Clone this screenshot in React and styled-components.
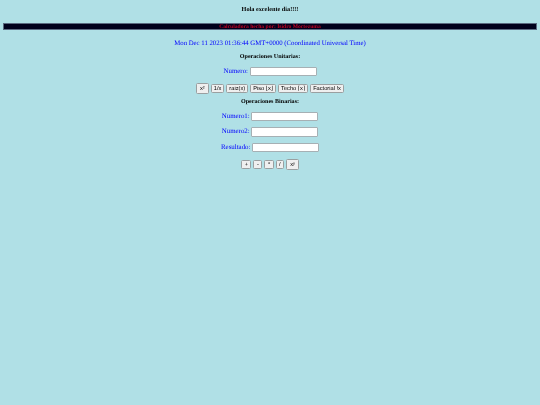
import React from "react";
import styled, { createGlobalStyle } from "styled-components";

const Global = createGlobalStyle`
  html, body { margin: 0; padding: 0; background: #b0e0e6; }
  body {
    font-family: "Liberation Serif", "Times New Roman", serif;
    text-rendering: geometricPrecision;
  }
`;

const Page = styled.div`
  width: 540px;
  height: 405px;
  overflow: hidden;
  display: flex;
  flex-direction: column;
  align-items: center;
  background: #b0e0e6;
  color: #0000ff;
  text-align: center;
  filter: blur(0.2px);
`;

const Greeting = styled.h1`
  margin: 5px 0 0;
  height: 9px;
  line-height: 9px;
  font-size: 6.25px;
  font-weight: bold;
  color: #000;
`;

const Banner = styled.div`
  box-sizing: border-box;
  width: 534px;
  height: 7px;
  margin-top: 9px;
  border: 0.5px solid #5a6a80;
  background: #00001c;
  color: #c00020;
  font-size: 5.6px;
  font-weight: bold;
  line-height: 6px;
`;

const DateLine = styled.p`
  margin: 8.5px 0 0;
  height: 10px;
  line-height: 10px;
  font-size: 6.75px;
`;

const SectionTitle = styled.h2`
  margin: ${(p) => p.$top}px 0 0;
  height: 9px;
  line-height: 9px;
  font-size: 6.1px;
  font-weight: bold;
  color: #000;
`;

const Field = styled.label`
  display: flex;
  align-items: center;
  justify-content: center;
  gap: 1.5px;
  margin-top: ${(p) => p.$top}px;
  height: 10px;
  font-size: 6.9px;
  line-height: 10px;
`;

const TextInput = styled.input`
  box-sizing: border-box;
  width: 67px;
  height: 9.5px;
  padding: 0;
  background: #fff;
  border: 1px solid #a6b0b4;
  border-radius: 1px;
`;

const ButtonRow = styled.div`
  display: flex;
  justify-content: center;
  align-items: center;
  gap: 2px;
  margin-top: ${(p) => p.$top}px;
`;

const CalcButton = styled.button`
  box-sizing: border-box;
  height: ${(p) => (p.$tall ? 11 : 9.5)}px;
  padding: 0 ${(p) => p.$pad ?? 2}px;
  background: #efefef;
  border: 0.75px solid #9a9fa0;
  border-radius: 1.5px;
  color: #000;
  font-family: "Liberation Sans", Arial, sans-serif;
  font-size: 5.7px;
  line-height: 8px;
  white-space: nowrap;
  text-rendering: geometricPrecision;
`;

const unary = ["1/x", "raiz(x)", "Piso ⌊x⌋", "Techo ⌈x⌉", "Factorial !x"];
const binary = ["+", "-", "*", "/"];

export default function App() {
  return (
    <>
      <Global />
      <Page>
        <Greeting>Hola excelente dia!!!!</Greeting>
        <Banner>Calculadora hecha por: Isidro Moctezuma</Banner>
        <DateLine>Mon Dec 11 2023 01:36:44 GMT+0000 (Coordinated Universal Time)</DateLine>
        <SectionTitle $top={4.5}>Operaciones Unitarias:</SectionTitle>
        <Field $top={4.5}>
          Numero:
          <TextInput />
        </Field>
        <ButtonRow $top={6.5}>
          <CalcButton $tall $pad={3}>x²</CalcButton>
          {unary.map((t) => (
            <CalcButton key={t}>{t}</CalcButton>
          ))}
        </ButtonRow>
        <SectionTitle $top={4}>Operaciones Binarias:</SectionTitle>
        <Field $top={4.5}>
          Numero1:
          <TextInput />
        </Field>
        <Field $top={5.5}>
          Numero2:
          <TextInput />
        </Field>
        <Field $top={5.5}>
          Resultado:
          <TextInput />
        </Field>
        <ButtonRow $top={6.5}>
          {binary.map((t) => (
            <CalcButton key={t} $pad={2.5}>{t}</CalcButton>
          ))}
          <CalcButton $tall $pad={3}>xʸ</CalcButton>
        </ButtonRow>
      </Page>
    </>
  );
}
